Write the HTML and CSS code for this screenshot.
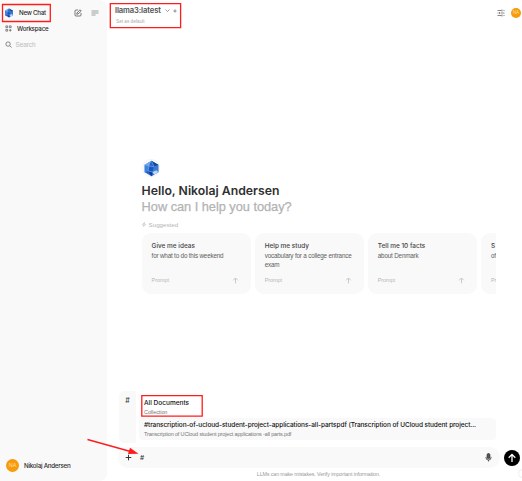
FILE: index.html
```html
<!DOCTYPE html>
<html lang="en">
<head>
<meta charset="utf-8">
<title>New Chat</title>
<link rel="stylesheet" href="styles.css">
</head>
<body>
<svg class="defs" width="0" height="0">
  <symbol id="logo" viewBox="0 0 20 20">
    <path d="M10 1 18 5.500v9L10 19l-8-4.500v-9z" fill="#2465c8"/>
    <path d="M10 1 7 7 2 5.500z" fill="#73a9ee"/><path d="M10 1l8 4.500L13 8z" fill="#174795"/>
    <path d="M2 5.500 7 7l-1 6-4 1.500z" fill="#3f82dd"/><path d="m7 7 6 1-2 6-5-1z" fill="#1558c4"/>
    <path d="m13 8 5-2.500v9L11 14z" fill="#3c79d5"/><path d="m6 13 5 1-1 5z" fill="#0d3d95"/>
    <path d="m11 14 5-2 2 2.500-5 2.800z" fill="#b9d4f6"/><path d="M2 5.500 7 7l6 1-3-7M7 7l-1 6 5 1" fill="none" stroke="#9bc4f5" stroke-width=".6"/>
  </symbol>
  <symbol id="up" viewBox="0 0 10 10"><path d="M5 9V1.500M1.700 4.700 5 1.400l3.300 3.300" fill="none" stroke="currentColor" stroke-width="1.300"/></symbol>
</svg>
<div class="app">
  <aside class="sidebar">
    <div class="row top"><svg class="logo-s"><use href="#logo"/></svg><span class="t-new">New Chat</span>
      <svg class="edit" viewBox="0 0 16 16"><path d="M8 2H4a2 2 0 0 0-2 2v8a2 2 0 0 0 2 2h8a2 2 0 0 0 2-2V8M6 8l6-6.500 2.500 2.500L8 10l-2.500.5z"/></svg>
      <svg class="lines" viewBox="0 0 16 12"><path d="M1 2h14M1 6h14M1 10h8"/></svg></div>
    <div class="row work"><svg class="ic" viewBox="0 0 16 16"><path d="M2 2h4v4H2zM10 2h4v4h-4zM2 10h4v4H2zM12 9v6M9 12h6"/></svg><span class="t-work">Workspace</span></div>
    <div class="row search"><svg class="ic" viewBox="0 0 16 16"><circle cx="7" cy="7" r="5"/><path d="m11 11 4 4"/></svg><span class="t-search">Search</span></div>
    <div class="row user"><span class="avatar">NA</span><span class="t-user">Nikolaj Andersen</span></div>
  </aside>
  <main class="main">
    <header class="header">
      <div class="model"><div class="model-row"><span class="t-model">llama3:latest</span>
        <svg class="chev" viewBox="0 0 10 10"><path d="m1 3 4 4 4-4"/></svg><svg class="plus-s" viewBox="0 0 10 10"><path d="M5 1v8M1 5h8"/></svg></div>
        <div class="t-default">Set as default</div></div>
      <div class="tools"><svg class="sliders" viewBox="0 0 16 16"><path d="M1 3h8M13 3h2M1 8h2M7 8h8M1 13h8M13 13h2M10 1v4M5 6v4M10 11v4"/></svg><span class="avatar small">NA</span></div>
    </header>
    <section class="hero">
      <div class="ring"><svg><use href="#logo"/></svg></div>
      <h1 class="hello">Hello, Nikolaj Andersen</h1>
      <p class="how">How can I help you today?</p>
      <div class="suggested"><svg viewBox="0 0 10 10"><path d="M6 0 1 6h3.500L4 10l5-6H5.500z"/></svg><span>Suggested</span></div>
      <div class="cards">
        <article class="card"><h2>Give me ideas</h2><p>for what to do this weekend</p><footer>Prompt<svg><use href="#up"/></svg></footer></article>
        <article class="card"><h2>Help me study</h2><p>vocabulary for a college entrance exam</p><footer>Prompt<svg><use href="#up"/></svg></footer></article>
        <article class="card"><h2>Tell me 10 facts</h2><p>about Denmark</p><footer>Prompt<svg><use href="#up"/></svg></footer></article>
        <article class="card peek"><h2>S</h2><p>of</p><footer>Pr</footer></article>
      </div>
    </section>
    <section class="picker">
      <div class="hash">#</div>
      <div class="options">
        <div class="option"><div class="t-all">All Documents</div><div class="sub t-coll">Collection</div></div>
        <div class="option active"><div class="t-doc">#transcription-of-ucloud-student-project-applications-all-partspdf (Transcription of UCloud student project...</div><div class="sub t-pdf">Transcription of UCloud student project applications -all parts.pdf</div></div>
      </div>
    </section>
    <div class="composer">
      <div class="input"><svg class="add" viewBox="0 0 10 10"><path d="M5 1v8M1 5h8"/></svg><span>#</span>
        <svg class="mic" viewBox="0 0 12 16"><rect x="3.500" y="1" width="5" height="9" rx="2.500"/><path d="M1.500 7v1a4.500 4.500 0 0 0 9 0V7M6 12.500V15"/></svg></div>
      <div class="send"><svg><use href="#up"/></svg></div>
    </div>
    <div class="note">LLMs can make mistakes. Verify important information.</div>
  </main>
  <div class="help"></div>
  <svg class="marks" viewBox="0 0 522 481"><g fill="none" stroke="#ff1c1c" stroke-width="1.300"><path d="M2.500 4.500h47.800v17h-47.800zM110.300 3.700h70.300v24h-70.300zM141.800 395.700h60.400v20.500h-60.400zM87.500 439.500l43 12"/></g><path d="m138.500 453.700-10.500.3 2-6.200z" fill="#ff1c1c"/></svg>
</div>
</body>
</html>
```
FILE: styles.css
```css
* { box-sizing: border-box; }
body { margin: 0; background: #fff; color: #222; font-family: "Liberation Sans", Arial, sans-serif; }
h1, h2, p { margin: 0; }
svg { display: block; flex: none; fill: none; stroke: currentColor; stroke-width: 1.4; }
.defs { position: absolute; }
use { stroke: none; }
.app { position: relative; display: flex; width: 522px; height: 481px; overflow: hidden; white-space: nowrap; }
.sidebar { width: 107px; flex: none; display: flex; flex-direction: column; background: #f9f9f9; border-radius: 0 8px 8px 0; padding: 4px 8px 7px 4px; }
.row { display: flex; align-items: center; height: 16px; flex: none; }
.top { height: 17px; }
.work { height: 15px; }
.logo-s { width: 10px; height: 10px; }
.t-new, .t-work, .t-user { font: 500 6.2px Inter, sans-serif; letter-spacing: -.24px; color: #2a2a2a; }
.t-new { margin-left: 5px; width: 55px; }
.edit { width: 8px; height: 8px; color: #444; }
.lines { width: 8px; height: 6px; margin-left: 9px; color: #777; }
.ic { width: 7px; height: 7px; margin-left: 1px; color: #444; }
.t-work { margin-left: 5px; }
.t-search { margin-left: 3.5px; color: #bbb; font-size: 6.4px; letter-spacing: -.05px; }
.user { margin-top: auto; margin-left: 2px; height: 18px; }
.avatar { width: 13px; height: 13px; border-radius: 50%; background: #f79a0c; color: #ffe0a8; font-size: 5.4px; line-height: 13px; text-align: center; }
.avatar.small { width: 10px; height: 10px; line-height: 10px; font-size: 4.5px; }
.t-user { margin-left: 5px; }
.main { flex: 1; min-width: 0; display: flex; flex-direction: column; }
.header { height: 28px; display: flex; justify-content: space-between; padding: 6px 1px 0 8px; }
.model-row { display: flex; align-items: center; height: 9px; }
.t-model { font: 600 7.6px/9px Inter, sans-serif; letter-spacing: -.1px; width: 49.5px; color: #505050; }
.chev { width: 5px; height: 5px; color: #777; }
.plus-s { width: 4px; height: 4px; margin-left: 3.5px; color: #777; stroke-width: 2; }
.t-default { font-size: 4.7px; line-height: 6px; margin-top: 4px; padding-left: 1px; color: #aaa; }
.tools { display: flex; gap: 6px; align-items: center; height: 13px; }
.sliders { width: 8px; height: 8px; color: #555; }
.hero { margin: 131px 26px 0 34.6px; }
.ring { width: 18px; height: 18px; border: 1px solid #f2f2f2; border-radius: 50%; display: grid; place-items: center; }
.ring svg { width: 17px; height: 17px; }
.hello { font: 600 12.25px/16px Inter, sans-serif; margin-top: 6px; color: #303030; }
.how { font-size: 12.8px; line-height: 15px; letter-spacing: -.03px; color: #b3b3b3; -webkit-text-stroke: .25px #b3b3b3; }
.suggested { display: flex; align-items: center; gap: 3px; height: 10px; margin-top: 5px; font-size: 6.2px; color: #b4b4b4; }
.suggested svg { width: 4px; height: 5px; }
.cards { display: flex; gap: 3.5px; margin-top: 4px; overflow: hidden; }
.card { width: 109.6px; height: 61px; flex: none; background: #f9f9f9; border-radius: 9px; padding: 9px 12px 9px 10px; display: flex; flex-direction: column; white-space: normal; }
.card.peek { width: 16px; border-radius: 9px 0 0 9px; padding-right: 0; }
.peek h2, .peek p, .peek footer { letter-spacing: -.3px; }
.card h2 { font: 500 6.45px/9px Inter, sans-serif; white-space: nowrap; color: #444; }
.card p { font-size: 6.3px; line-height: 9px; letter-spacing: -.18px; color: #606060; margin: -.5px -2px 0 0; }
.card footer { margin-top: auto; height: 10px; display: flex; justify-content: space-between; align-items: center; font-size: 5.5px; letter-spacing: -.08px; color: #b7b7b7; }
.card footer svg { width: 7px; height: 7px; color: #c4c4c4; }
.picker { margin: auto 26px 0 12px; height: 52px; display: flex; gap: 3px; }
.hash { width: 17px; background: #f9f9f9; border-radius: 5px 0 0 5px; text-align: center; color: #444; font: 500 7px/20px Inter, sans-serif; }
.options { flex: 1; padding-top: 5px; min-width: 0; }
.option { height: 22px; padding: 2px 5px; line-height: 8px; }
.option.active { background: #f9f9f9; border-radius: 4px; }
.t-all, .t-doc { font: 500 6.5px/10px Inter, sans-serif; color: #111; }
.t-doc { letter-spacing: -.085px; }
.sub { font-size: 5.5px; line-height: 8px; letter-spacing: -.08px; color: #777; }
.t-pdf { letter-spacing: -.155px; }
.composer { display: flex; align-items: center; gap: 4px; height: 21px; margin: 4px 2px 0 11px; }
.input { flex: 1; height: 21px; display: flex; align-items: center; background: #f9f9f9; border-radius: 10px; padding: 0 8px 0 7px; color: #333; font: 500 6.5px Inter, sans-serif; }
.add { width: 7px; height: 7px; margin-right: 8px; }
.mic { width: 7px; height: 9px; margin-left: auto; }
.mic rect { fill: #555; }
.send { width: 16px; height: 16px; border-radius: 50%; background: #000; color: #fff; display: grid; place-items: center; }
.send svg { width: 10px; height: 10px; }
.note { height: 13px; font-size: 5.3px; line-height: 13px; letter-spacing: -.1px; text-align: center; color: #999; padding-left: 8px; }
.help { position: absolute; left: 518px; top: 469px; width: 9px; height: 9px; border: 1px solid #eee; border-radius: 50%; }
.marks { position: absolute; inset: 0; width: 522px; height: 481px; pointer-events: none; }
.marks > path { stroke: none; }
```
